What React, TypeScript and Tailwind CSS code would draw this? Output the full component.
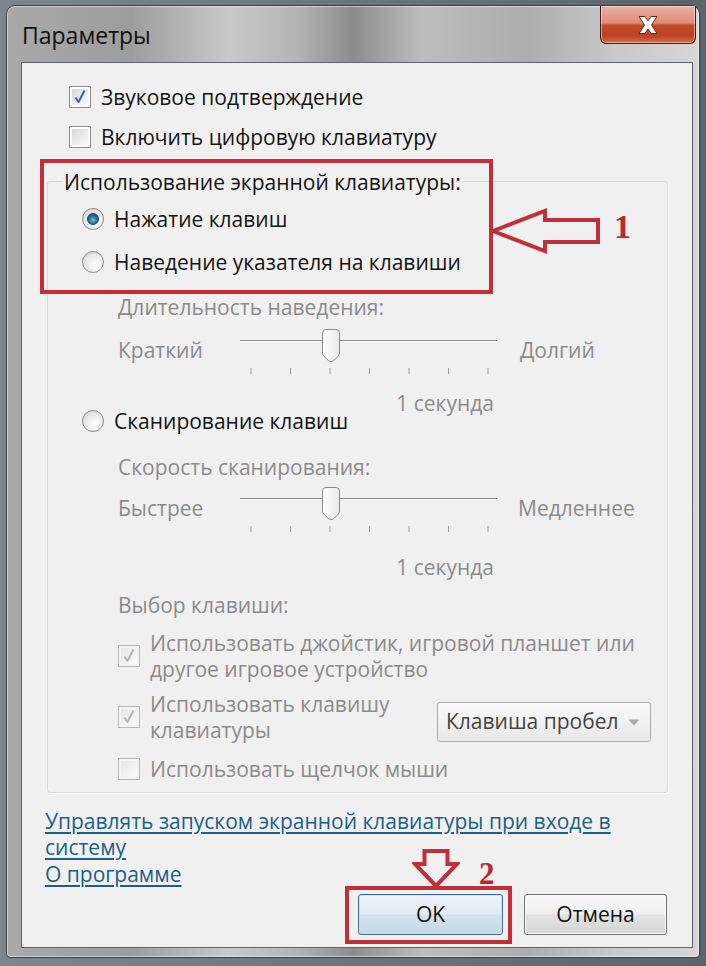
import React from 'react';

const FONT = { fontFamily: '"Open Sans", "Noto Sans", sans-serif' };

// Win7 style checkbox
const CheckBox: React.FC<{ checked?: boolean; disabled?: boolean }> = ({ checked, disabled }) => (
  <span
    className={
      'shrink-0 w-[22px] h-[22px] border flex items-center justify-center ' +
      (disabled ? 'border-[#b8b8b8] bg-[#f4f4f4]' : 'border-[#8e8f8f] bg-white')
    }
  >
    <span
      className={
        'w-[16px] h-[16px] flex items-center justify-center bg-gradient-to-br ' +
        (disabled ? 'from-[#e6e6e6] to-[#fbfbfb]' : 'from-[#d8d8d8] to-[#fafafa]')
      }
    >
      {checked && (
        <svg width="16" height="16" viewBox="0 0 16 16">
          <path
            d="M3.5 8.5 L6.5 13 L12.5 1.5"
            fill="none"
            stroke={disabled ? '#b3b3b3' : '#4b5f8e'}
            strokeWidth="2"
            strokeLinejoin="round"
          />
        </svg>
      )}
    </span>
  </span>
);

// Win7 style radio
const Radio: React.FC<{ checked?: boolean }> = ({ checked }) => (
  <span className="shrink-0 w-[22px] h-[22px] rounded-full border border-[#8a8c8e] bg-[radial-gradient(circle_at_60%_65%,#ffffff_0%,#e8e8e8_55%,#c9c9c9_100%)] flex items-center justify-center">
    {checked && (
      <span className="w-[12px] h-[12px] rounded-full border border-[#1d3d55] bg-[radial-gradient(circle_at_50%_60%,#7fc0e6_0%,#2f7bab_40%,#173f5c_100%)]" />
    )}
  </span>
);

const Slider: React.FC = () => {
  const ticks = [15, 54.5, 94, 133.5, 173, 212.5, 252];
  return (
    <svg width="270" height="50" viewBox="0 0 270 50" className="shrink-0">
      <line x1="4" y1="14.5" x2="261" y2="14.5" stroke="#8c8c8c" strokeWidth="1" />
      <line x1="4" y1="15.5" x2="261" y2="15.5" stroke="#ffffff" strokeWidth="1" />
      {ticks.map((x) => (
        <line key={x} x1={x} y1="42" x2={x} y2="48" stroke="#9a9a9a" strokeWidth="1" />
      ))}
      <defs>
        <linearGradient id="thumb" x1="0" y1="0" x2="1" y2="0">
          <stop offset="0" stopColor="#ffffff" />
          <stop offset="1" stopColor="#e9e9e9" />
        </linearGradient>
      </defs>
      <path
        d="M86.5 7 Q86.5 3.5 90 3.5 H100 Q103.5 3.5 103.5 7 V27 Q103.5 29 101.5 31 L97 35 Q95 36.5 93 35 L88.5 31 Q86.5 29 86.5 27 Z"
        fill="url(#thumb)"
        stroke="#8a8a8a"
        strokeWidth="1"
      />
    </svg>
  );
};

export default function App() {
  return (
    <div
      className="w-[706px] h-[966px] overflow-hidden bg-[linear-gradient(90deg,#7d858d_0%,#5c646b_100%)]"
      style={FONT}
    >
      {/* window frame */}
      <div className="ml-[6px] mt-[5px] w-[694px] h-[953px] rounded-t-[9px] rounded-b-[4px] border border-[#3e3e3e] flex flex-col bg-[linear-gradient(90deg,#a9a9a9_0%,#9d9d9d_18%,#c9c9c9_32%,#b4b4b4_42%,#8c8c8c_50%,#bdbdbd_60%,#adadad_75%,#c9c9c9_88%,#d6d6d6_100%)] shadow-[inset_0_0_0_1px_rgba(255,255,255,0.5)]">
        {/* title bar */}
        <div className="h-[56px] flex items-start shrink-0">
          <span className="pl-[15px] pt-[16px] text-[23px] leading-[26px] text-[#111]">Параметры</span>
          <div className="ml-auto mr-[3px] w-[96px] h-[38px] rounded-b-[6px] border border-t-0 border-[#3a1f1a] bg-[linear-gradient(180deg,#eab3a4_0%,#dc8b76_46%,#c44a2c_52%,#bf4125_80%,#d4704a_100%)] shadow-[inset_0_0_0_1px_rgba(255,255,255,0.45)] flex items-center justify-center">
            <svg width="24" height="20" viewBox="0 0 24 20">
              <path
                d="M3 1.5 H9 L12 6 L15 1.5 H21 L15.5 10 L21 18.5 H15 L12 14 L9 18.5 H3 L8.5 10 Z"
                fill="#ffffff"
                stroke="#6e2518"
                strokeWidth="1"
                strokeLinejoin="round"
              />
            </svg>
          </div>
        </div>

        {/* client area */}
        <div className="ml-[14px] mr-[6px] mb-[9px] flex-1 border border-[#5d6368] bg-[#f0f0f0] flex flex-col text-[21px] text-[#141414]">
          <div className="pl-[47px] pt-[23px] flex flex-col">
            <div className="h-[22px] flex items-center gap-[10px]">
              <CheckBox checked />
              <span className="leading-[22px]">Звуковое подтверждение</span>
            </div>
            <div className="mt-[18px] h-[22px] flex items-center gap-[10px]">
              <CheckBox />
              <span className="leading-[22px]">Включить цифровую клавиатуру</span>
            </div>
          </div>

          {/* group box */}
          <div className="relative ml-[25px] mt-[33px] w-[621px] h-[612px] border border-[#d5d9dc] rounded-[3px] flex flex-col shadow-[1px_1px_0_#ffffff]">
            <span className="self-start -mt-[12px] ml-[15px] px-[1px] bg-[#f0f0f0] leading-[24px]">
              Использование экранной клавиатуры:
            </span>

            <div className="mt-[13px] ml-[34px] h-[24px] flex items-center gap-[10px]">
              <Radio checked />
              <span className="leading-[24px]">Нажатие клавиш</span>
            </div>
            <div className="mt-[19px] ml-[34px] h-[24px] flex items-center gap-[10px]">
              <Radio />
              <span className="leading-[24px]">Наведение указателя на клавиши</span>
            </div>

            <div className="mt-[21px] ml-[70px] h-[24px] leading-[24px] text-[#8b8b8b]">Длительность наведения:</div>
            <div className="mt-[7px] ml-[70px] h-[50px] flex items-center text-[#8b8b8b]">
              <span className="w-[118px]">Краткий</span>
              <Slider />
              <span className="ml-[14px]">Долгий</span>
            </div>
            <div className="mt-[18px] w-[446px] h-[18px] leading-[18px] text-right text-[#8b8b8b]">1 секунда</div>

            <div className="ml-[34px] h-[18px] flex items-center gap-[10px]">
              <Radio />
              <span className="leading-[18px]">Сканирование клавиш</span>
            </div>

            <div className="mt-[25px] ml-[70px] h-[24px] leading-[24px] text-[#8b8b8b]">Скорость сканирования:</div>
            <div className="mt-[5px] ml-[70px] h-[50px] flex items-center text-[#8b8b8b]">
              <span className="w-[118px]">Быстрее</span>
              <Slider />
              <span className="ml-[12px]">Медленнее</span>
            </div>
            <div className="mt-[24px] w-[446px] h-[18px] leading-[18px] text-right text-[#8b8b8b]">1 секунда</div>

            <div className="mt-[17px] ml-[70px] h-[24px] leading-[24px] text-[#8b8b8b]">Выбор клавиши:</div>

            <div className="mt-[13px] ml-[70px] flex items-center gap-[10px] text-[#8b8b8b]">
              <CheckBox checked disabled />
              <div className="flex flex-col">
                <span className="h-[26px] leading-[26px]">Использовать джойстик, игровой планшет или</span>
                <span className="h-[26px] leading-[26px]">другое игровое устройство</span>
              </div>
            </div>
            <div className="mt-[9px] ml-[70px] flex items-start text-[#8b8b8b]">
              <div className="w-[319px] shrink-0 flex items-center gap-[10px]">
                <CheckBox checked disabled />
                <div className="flex flex-col">
                  <span className="h-[26px] leading-[26px]">Использовать клавишу</span>
                  <span className="h-[26px] leading-[26px]">клавиатуры</span>
                </div>
              </div>
              <div className="shrink-0 mt-[11px] w-[214px] h-[40px] rounded-[3px] border border-[#ababab] bg-[linear-gradient(180deg,#fafafa_0%,#f1f1f1_50%,#e7e7e7_100%)] flex items-center pl-[8px] pr-[10px] text-[#444]">
                <span className="flex-1">Клавиша пробел</span>
                <svg width="12" height="7" viewBox="0 0 12 7">
                  <path d="M0.5 0.5 H11.5 L6 6.5 Z" fill="#a9a9a9" />
                </svg>
              </div>
            </div>
            <div className="mt-[14px] ml-[70px] h-[24px] flex items-center gap-[10px] text-[#8b8b8b]">
              <CheckBox disabled />
              <span className="leading-[24px]">Использовать щелчок мыши</span>
            </div>

            {/* annotation 1 */}
            <div className="absolute left-[-8px] top-[-23px] w-[453px] h-[135px] border-[4px] border-[#c22f38]" />
            <svg className="absolute left-[442px] top-[25px]" width="112" height="48" viewBox="0 0 112 48">
              <path
                d="M3 24 L55 4 L55 13 L108 13 L108 35 L55 35 L55 44 Z"
                fill="none"
                stroke="#c0303a"
                strokeWidth="4"
                strokeLinejoin="miter"
              />
            </svg>
            <span className="absolute left-[566px] top-[28px] text-[34px] leading-[34px] font-bold text-[#b9282f]" style={{ fontFamily: '"Liberation Serif", serif' }}>
              1
            </span>
          </div>

          {/* links */}
          <div className="ml-[23px] mt-[15px] flex flex-col text-[#1c5f8b] leading-[26px]">
            <span className="underline underline-offset-[3px]">Управлять запуском экранной клавиатуры при входе в</span>
            <span className="underline underline-offset-[3px] self-start">систему</span>
            <span className="mt-[1px] underline underline-offset-[3px] self-start">О программе</span>
          </div>

          {/* buttons */}
          <div className="mt-[7px] mr-[25px] flex justify-end gap-[21px]">
            <div className="relative">
              <button className="w-[145px] h-[41px] rounded-[3px] border border-[#3a6f95] bg-[linear-gradient(180deg,#eef4f8_0%,#e2ecf3_48%,#d3e1ec_52%,#c7d7e4_100%)] shadow-[inset_0_0_0_1px_#c6e6f8] text-[21px] text-[#111]">
                OK
              </button>
              <div className="absolute left-[-13px] top-[-8px] w-[167px] h-[58px] border-[4px] border-[#c22f38]" />
              <svg className="absolute left-[54px] top-[-45px]" width="48" height="40" viewBox="0 0 48 40">
                <path
                  d="M12.5 2 H35.5 V15 H45 L24 37 L3 15 H12.5 Z"
                  fill="none"
                  stroke="#c0303a"
                  strokeWidth="4"
                />
              </svg>
              <span className="absolute left-[121px] top-[-36px] text-[31px] leading-[31px] font-bold text-[#b9282f]" style={{ fontFamily: '"Liberation Serif", serif' }}>
                2
              </span>
            </div>
            <button className="w-[143px] h-[41px] rounded-[3px] border border-[#707070] bg-[linear-gradient(180deg,#f7f7f7_0%,#efefef_48%,#e2e2e2_52%,#d6d6d6_100%)] shadow-[inset_0_0_0_1px_#fcfcfc] text-[21px] text-[#111]">
              Отмена
            </button>
          </div>
        </div>
      </div>
    </div>
  );
}
